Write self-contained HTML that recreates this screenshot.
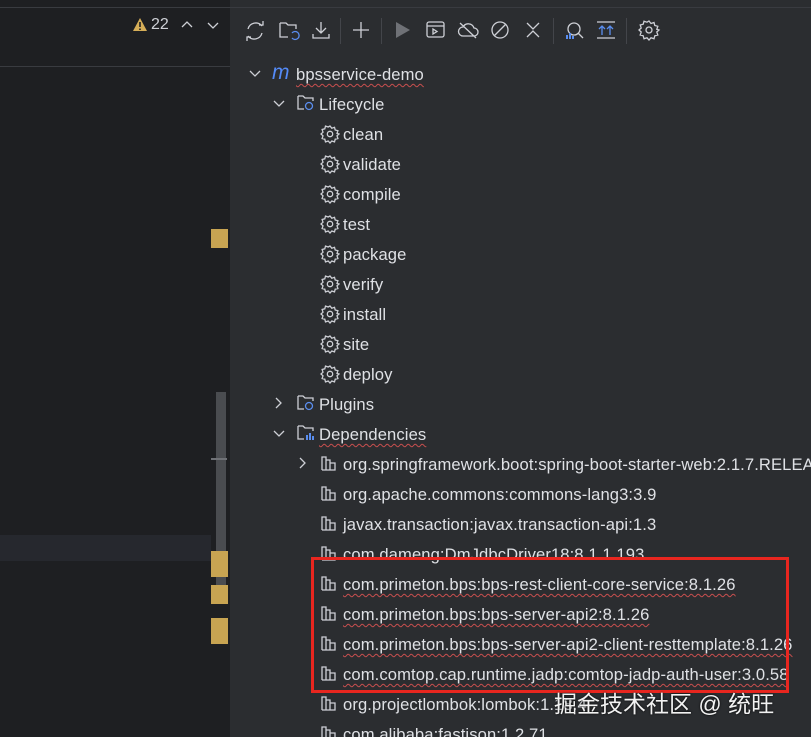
<!DOCTYPE html><html><head><style>
html,body{margin:0;width:811px;height:737px;overflow:hidden}
body{background:#2b2d30;font-family:"Liberation Sans","Noto Sans CJK SC",sans-serif;position:relative}
.left{position:absolute;left:0;top:0;width:230px;height:737px;background:#1e1f22}
.a{position:absolute}
.row{position:absolute;height:30px;line-height:30px;font-size:16.6px;letter-spacing:0.1px;color:#dfe1e5;white-space:nowrap}
.w{text-decoration:underline wavy #c94f4f;text-decoration-thickness:1px;text-underline-offset:3px}
.ic{position:absolute;stroke:#ced0d6;fill:none;stroke-width:1.3}
</style></head><body>
<div class="left">
<div class="a" style="left:0;top:7px;width:230px;height:1px;background:#393b40"></div>
<div class="a" style="left:0;top:66px;width:230px;height:1px;background:#393b40"></div>
<svg style="position:absolute;left:132px;top:17px" width="16" height="15"><path d="M8 1L15 14H1z" fill="#d6ae58"/><path d="M8 5v5M8 11.5v1.5" stroke="#1e1f22" stroke-width="1.6"/></svg>
<div class="a" style="left:151px;top:16px;font-size:16px;color:#ced0d6">22</div>
<svg class="ic" style="left:180px;top:20px" width="14" height="10"><path d="M2 7L7 2L12 7"/></svg>
<svg class="ic" style="left:206px;top:20px" width="14" height="10"><path d="M2 3L7 8L12 3"/></svg>
<div class="a" style="left:0;top:535px;width:211px;height:26px;background:#26282e"></div>
<div class="a" style="left:216px;top:392px;width:10px;height:210px;background:#4a4c50"></div>
<div class="a" style="left:211px;top:458px;width:16px;height:2px;background:#6f7176"></div>
<div class="a" style="left:211px;top:229px;width:17px;height:19px;background:#c8a452"></div>
<div class="a" style="left:211px;top:551px;width:17px;height:26px;background:#c8a452"></div>
<div class="a" style="left:211px;top:585px;width:17px;height:19px;background:#c8a452"></div>
<div class="a" style="left:211px;top:618px;width:17px;height:26px;background:#c8a452"></div>
</div>
<div class="a" style="left:230px;top:7px;width:581px;height:1px;background:#393b40"></div>
<svg class="ic" style="left:244px;top:19px" width="24" height="24"><path d="M4 10a8 8 0 0 1 14-3M18 14a8 8 0 0 1-14 3M15 6h4V2M7 18H3v4"/></svg>
<svg class="ic" style="left:278px;top:19px" width="24" height="24"><path d="M2 4h6l2 2h8v4M2 4v14h8"/><path d="M14 14a4 4 0 1 1 0 5" stroke="#5a8ef0"/></svg>
<svg class="ic" style="left:310px;top:19px" width="24" height="24"><path d="M11 3v11M6 9l5 5 5-5M3 15v4h16v-4"/></svg>
<div class="a" style="left:340px;top:18px;width:1px;height:26px;background:#43454a"></div>
<svg class="ic" style="left:350px;top:19px" width="22" height="22"><path d="M11 3v16M3 11h16"/></svg>
<div class="a" style="left:381px;top:18px;width:1px;height:26px;background:#43454a"></div>
<svg style="position:absolute;left:393px;top:20px" width="20" height="20"><path d="M3 2l14 8-14 8z" fill="#6f7176"/></svg>
<svg class="ic" style="left:425px;top:20px" width="22" height="20"><rect x="2" y="2" width="17" height="15" rx="2"/><path d="M2 6h17M8 9v5l4-2.5z"/></svg>
<svg class="ic" style="left:457px;top:20px" width="22" height="20"><path d="M6 16h11a4 4 0 0 0 0-8 6 6 0 0 0-11-1 4 4 0 0 0 0 9zM3 3l16 15"/></svg>
<svg class="ic" style="left:489px;top:19px" width="22" height="22"><circle cx="11" cy="11" r="8"/><path d="M5 17L17 5"/></svg>
<svg class="ic" style="left:523px;top:20px" width="20" height="20"><path d="M4 3l6 6 6-6M4 17l6-6 6 6"/></svg>
<div class="a" style="left:553px;top:18px;width:1px;height:26px;background:#43454a"></div>
<svg class="ic" style="left:562px;top:19px" width="24" height="22"><circle cx="12" cy="10" r="6"/><path d="M16 14l5 5"/><path d="M5 20v-4M8 20v-6M11 20v-3" stroke="#5a8ef0" stroke-width="2"/></svg>
<svg class="ic" style="left:595px;top:20px" width="22" height="20"><path d="M2 2h18M2 18h18"/><path d="M7 15V6M4 9l3-3 3 3M15 15V6M12 9l3-3 3 3" stroke="#5a8ef0"/></svg>
<div class="a" style="left:626px;top:18px;width:1px;height:26px;background:#43454a"></div>
<svg class="ic" style="left:638px;top:19px" width="24" height="24"><circle cx="11" cy="11" r="3"/><path d="M11 2l2 2.5 3-1 .8 3 3 .8-1 3L21 11l-2.2 2 1 3-3 .8-.8 3-3-1L11 21l-2-2.2-3 1-.8-3-3-.8 1-3L1 11l2.2-2-1-3 3-.8.8-3 3 1z"/></svg>
<svg class="ic" style="left:249px;top:69px" width="12" height="10"><path d="M1 2l5 5 5-5"/></svg>
<div class="row" style="left:272px;top:58px;color:#548af7;font-style:italic;font-size:21px">m</div>
<div class="row w" style="left:296px;top:60px">bpsservice-demo</div>
<svg class="ic" style="left:273px;top:99px" width="12" height="10"><path d="M1 2l5 5 5-5"/></svg>
<svg class="ic" style="left:296px;top:93px" width="20" height="20"><path d="M2 3h5l2 2h8v3M2 3v13h6"/><circle cx="13" cy="13" r="3.5" stroke="#5a8ef0"/></svg>
<div class="row" style="left:319px;top:90px">Lifecycle</div>
<div id="goals"></div>
<svg class="ic" style="left:274px;top:397px" width="10" height="12"><path d="M2 1l5 5-5 5"/></svg>
<svg class="ic" style="left:296px;top:393px" width="20" height="20"><path d="M2 3h5l2 2h8v3M2 3v13h6"/><circle cx="13" cy="13" r="3.5" stroke="#5a8ef0"/></svg>
<div class="row" style="left:319px;top:390px">Plugins</div>
<svg class="ic" style="left:273px;top:429px" width="12" height="10"><path d="M1 2l5 5 5-5"/></svg>
<svg class="ic" style="left:296px;top:423px" width="20" height="20"><path d="M2 3h5l2 2h8v3M2 3v13h6"/><path d="M11 17v-5M14 17v-7M17 17v-4" stroke="#5a8ef0" stroke-width="2"/></svg>
<div class="row w" style="left:319px;top:420px">Dependencies</div>
<svg class="ic" style="left:298px;top:457px" width="10" height="12"><path d="M2 1l5 5-5 5"/></svg>
<script>
var g=["clean","validate","compile","test","package","verify","install","site","deploy"],h="";
g.forEach(function(t,i){var y=120+i*30;h+='<svg class="ic" style="left:320px;top:'+(y+4)+'px" width="20" height="20"><circle cx="10" cy="10" r="2.7"/><path d="M10 2l1.8 2.2 2.7-.9.7 2.7 2.7.7-.9 2.7L19 10l-2 1.8.9 2.7-2.7.7-.7 2.7-2.7-.9L10 19l-1.8-2-2.7.9-.7-2.7-2.7-.7.9-2.7L1 10l2-1.8-.9-2.7 2.7-.7.7-2.7 2.7.9z"/></svg><div class="row" style="left:343px;top:'+y+'px">'+t+'</div>';});
var d=[["org.springframework.boot:spring-boot-starter-web:2.1.7.RELEASE",0],["org.apache.commons:commons-lang3:3.9",0],["javax.transaction:javax.transaction-api:1.3",0],["com.dameng:DmJdbcDriver18:8.1.1.193",0],["com.primeton.bps:bps-rest-client-core-service:8.1.26",1],["com.primeton.bps:bps-server-api2:8.1.26",1],["com.primeton.bps:bps-server-api2-client-resttemplate:8.1.26",1],["com.comtop.cap.runtime.jadp:comtop-jadp-auth-user:3.0.58",1],["org.projectlombok:lombok:1.18.4",0],["com.alibaba:fastjson:1.2.71",0]];
d.forEach(function(t,i){var y=450+i*30;h+='<svg class="ic" style="left:320px;top:'+(y+5)+'px" width="18" height="16"><path d="M2 15V2h4v13M6 15V5h4v10M10 15V8h5v7H2"/></svg><div class="row'+(t[1]?' w':'')+'" style="left:343px;top:'+y+'px">'+t[0]+'</div>';});
document.getElementById("goals").innerHTML=h;
</script>
<div class="a" style="left:311px;top:557px;width:472px;height:130px;border:3px solid #e8261f"></div>
<div class="a" style="left:554px;top:685px;font-size:23px;color:#f2f2f2;text-shadow:0 0 2px #000">掘金技术社区 @ 统旺</div>
</body></html>
